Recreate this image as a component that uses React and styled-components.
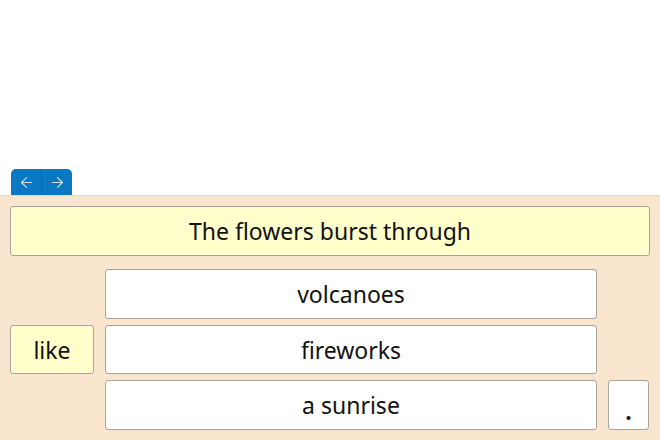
import React from "react";
import styled, { createGlobalStyle } from "styled-components";
import { ArrowLeft, ArrowRight } from "lucide-react";

const Global = createGlobalStyle`
  html, body { margin: 0; padding: 0; background: #ffffff; }
  body { font-family: "Noto Sans", "Open Sans", sans-serif; }
  #root { height: 440px; display: flex; flex-direction: column; }
`;

const Page = styled.div`
  flex: 1;
  display: flex;
  flex-direction: column;
  padding-top: 169px;
`;

const TabBar = styled.div`
  display: flex;
  padding-left: 11px;
  height: 26px;
`;

const NavGroup = styled.div`
  display: flex;
  background: #0a78c3;
  border-radius: 5px 5px 0 0;
  overflow: hidden;
`;

const NavButton = styled.button`
  width: 30px;
  height: 26px;
  border: none;
  padding: 0;
  margin: 0;
  background: transparent;
  display: flex;
  align-items: center;
  justify-content: center;
  color: #cfe4f6;
  cursor: pointer;
  & + & { border-left: 1px solid #0868ab; width: 31px; }
`;

const Panel = styled.div`
  flex: 1;
  background: #fae5cf;
  border-top: 1px solid #e2d9cf;
  padding: 10px 10px 0 10px;
  display: flex;
  flex-direction: column;
  gap: 13.5px;
`;

const Card = styled.div`
  box-sizing: border-box;
  height: 49.5px;
  background: ${(p) => (p.$fixed ? "#ffffcc" : "#ffffff")};
  border: 1px solid #a9a39c;
  border-radius: 3px;
  display: flex;
  align-items: center;
  justify-content: center;
  font-size: 23px;
  padding-top: 1px;
  color: #111;
  grid-column: ${(p) => p.$col || "auto"};
  grid-row: ${(p) => p.$row || "auto"};
`;

const Grid = styled.div`
  display: grid;
  grid-template-columns: 84px 492px 41px;
  grid-template-rows: 49.5px 49.5px 49.5px;
  column-gap: 11px;
  row-gap: 6px;
`;

const Dot = styled.span`
  align-self: flex-end;
  margin-bottom: 6px;
  line-height: 1;
  font-weight: 700;
`;

export default function App() {
  return (
    <>
      <Global />
      <Page>
        <TabBar>
          <NavGroup>
            <NavButton aria-label="previous"><ArrowLeft size={17} strokeWidth={1.5} /></NavButton>
            <NavButton aria-label="next"><ArrowRight size={17} strokeWidth={1.5} /></NavButton>
          </NavGroup>
        </TabBar>
        <Panel>
          <Card $fixed>The flowers burst through</Card>
          <Grid>
            <Card $col="2" $row="1">volcanoes</Card>
            <Card $fixed $col="1" $row="2">like</Card>
            <Card $col="2" $row="2">fireworks</Card>
            <Card $col="2" $row="3">a sunrise</Card>
            <Card $col="3" $row="3"><Dot>.</Dot></Card>
          </Grid>
        </Panel>
      </Page>
    </>
  );
}
